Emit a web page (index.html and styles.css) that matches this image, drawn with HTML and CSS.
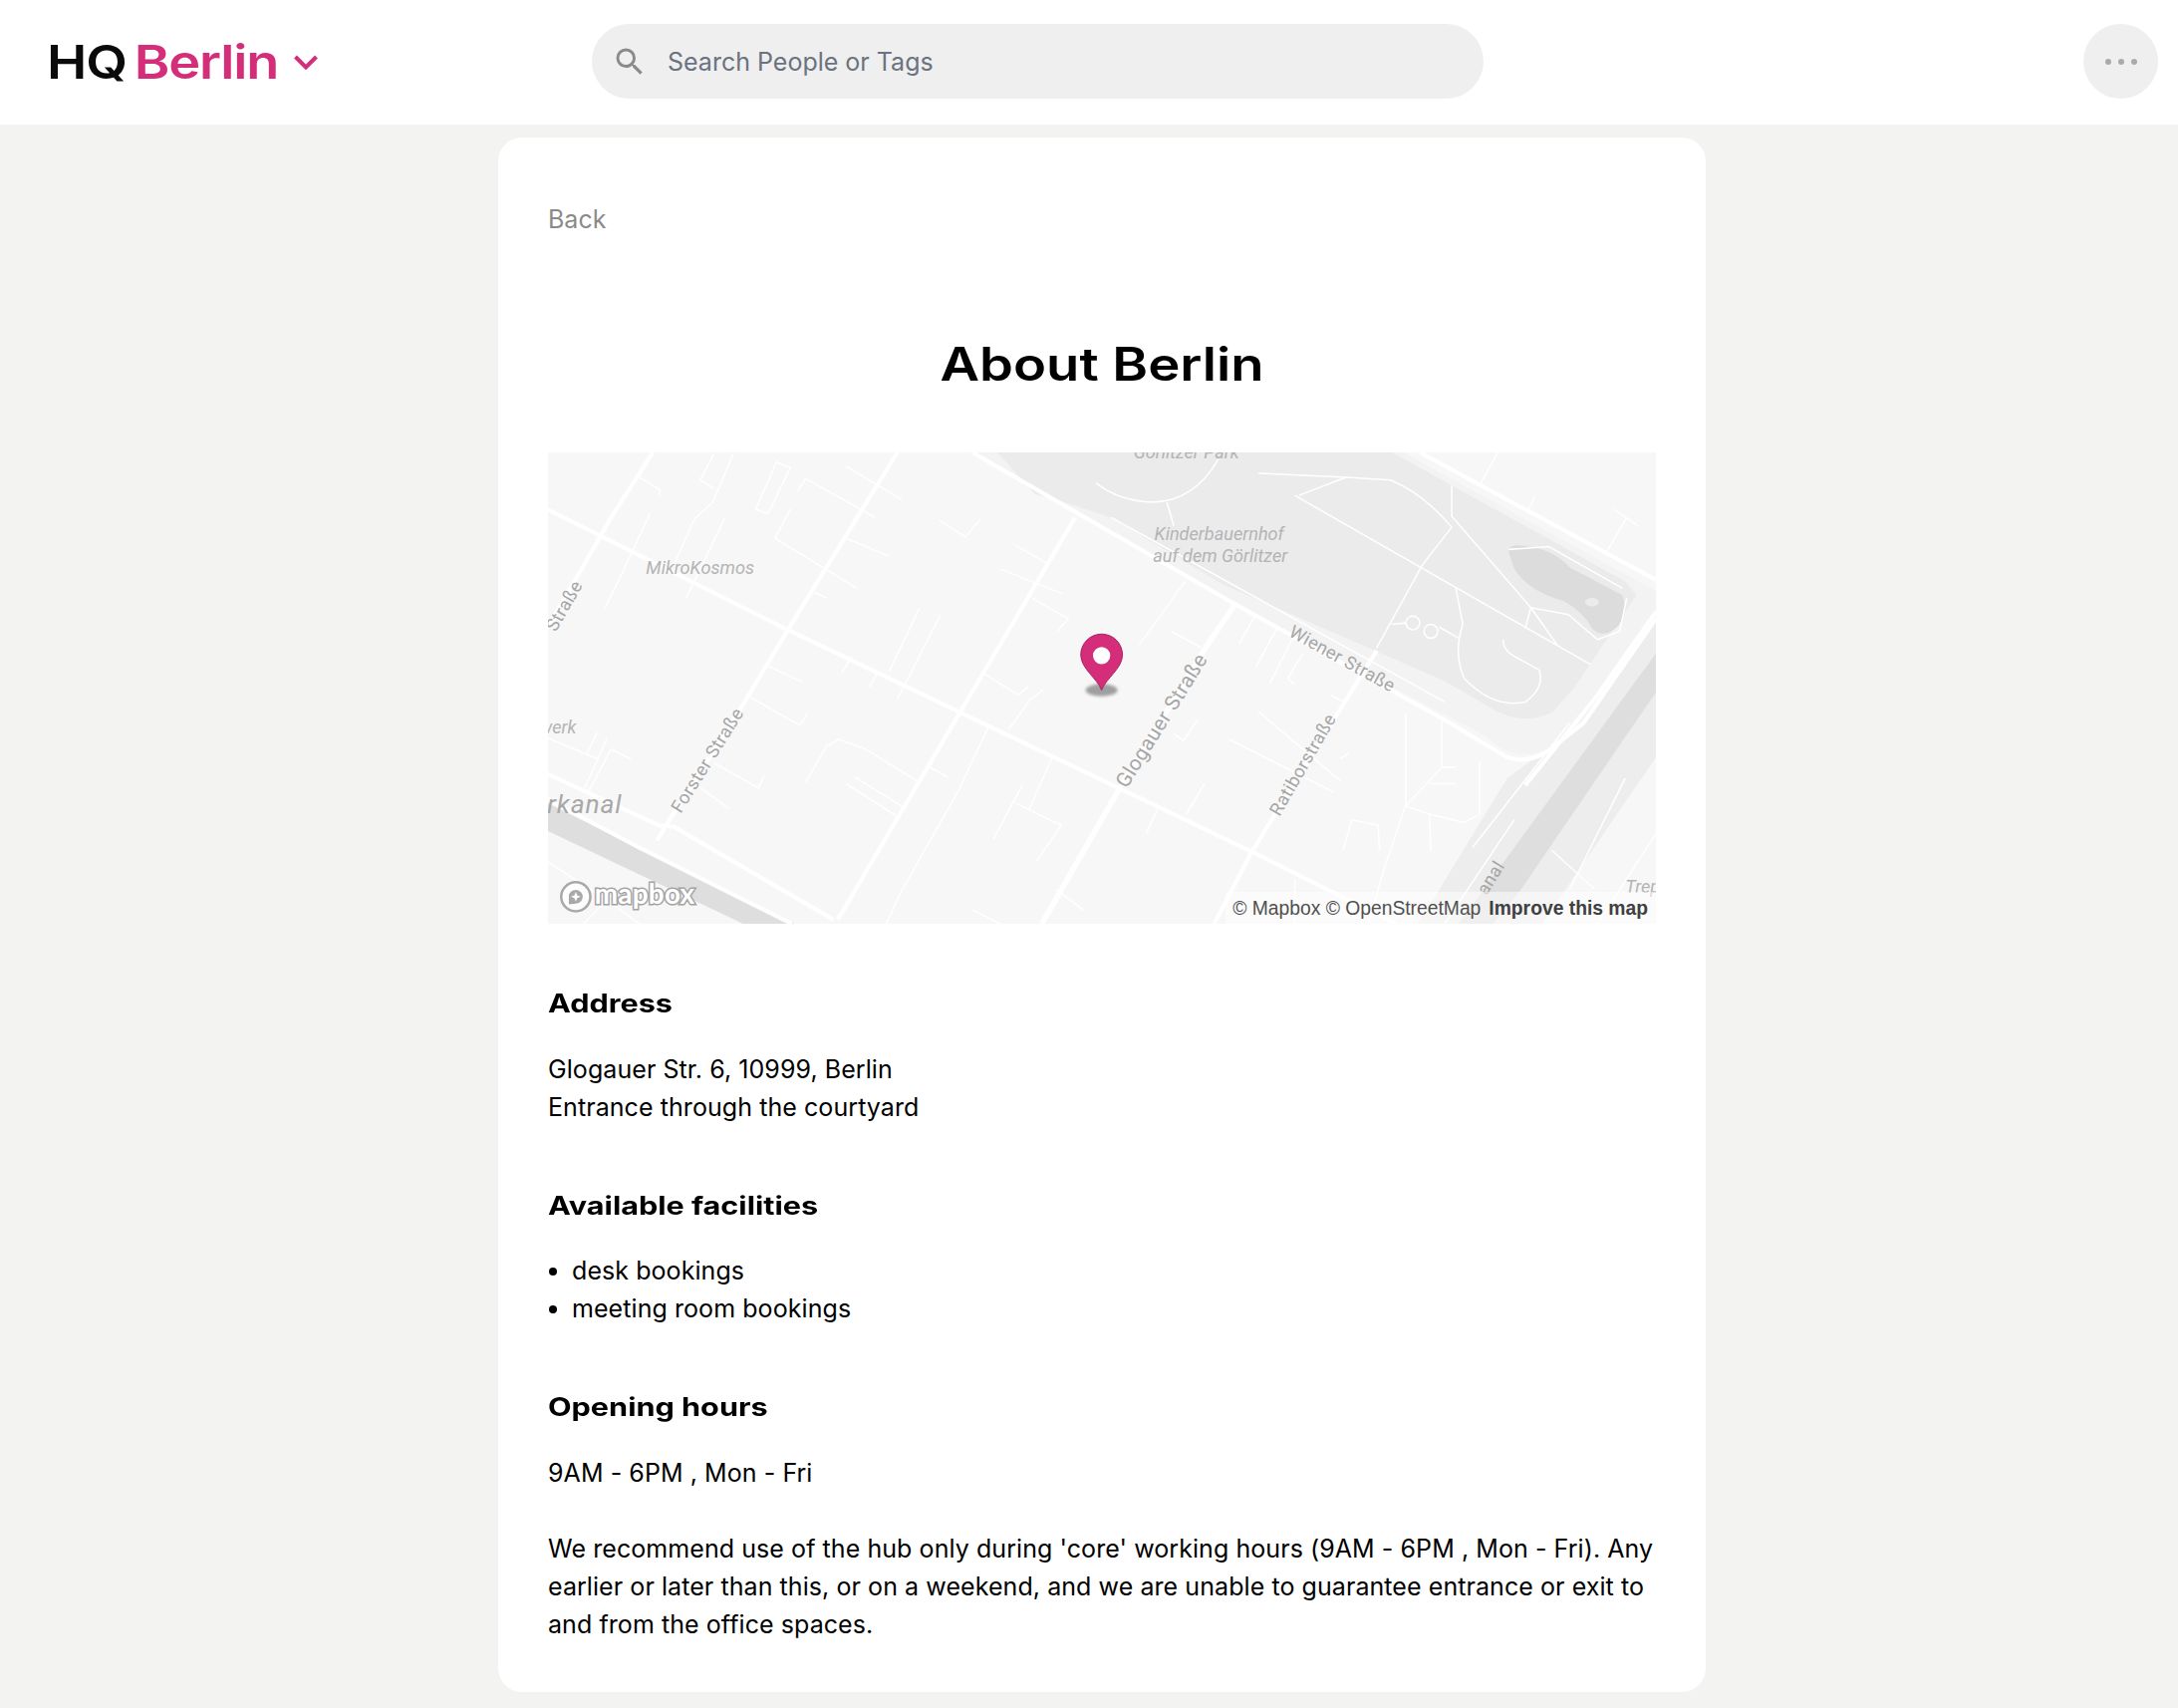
FILE: index.html
```html
<!DOCTYPE html>
<html lang="en">
<head>
<meta charset="utf-8">
<title>About Berlin</title>
<link rel="stylesheet" href="styles.css">
</head>
<body>
<header class="topbar">
  <div class="brand">
    <div class="brand-name"><span class="brand-hq">HQ</span><span class="brand-hub">Berlin</span></div>
    <svg class="chevron" viewBox="0 0 24 15"><path d="M1.5 2 L12 12.5 L22.5 2"/></svg>
  </div>
  <div class="search">
    <svg class="search-icon" viewBox="0 0 24 24"><path d="M15.5 14h-.79l-.28-.27A6.47 6.47 0 0 0 16 9.5 6.5 6.5 0 1 0 9.5 16c1.61 0 3.09-.59 4.23-1.57l.27.28v.79l5 4.99L20.49 19l-4.99-5zm-6 0C7.01 14 5 11.99 5 9.5S7.01 5 9.5 5 14 7.01 14 9.5 11.99 14 9.5 14z"/></svg>
    <span class="search-text">Search People or Tags</span>
  </div>
  <div class="more"><i></i><i></i><i></i></div>
</header>
<main class="card">
  <a class="back">Back</a>
  <h1 class="title">About Berlin</h1>
  <div class="map">
    <svg class="map-svg" viewBox="394.5 325 797.5 340" preserveAspectRatio="none">
      <rect class="land" x="394" y="325" width="800" height="340"/>
      <path class="park-edge" d="M700 325 L1010 325 L1192 425 L1192 445 L1140 520 Q1100 560 1070 530 L890 435 Z"/>
      <path class="park" d="M718 325 L1002 325 L1170 418 L1178 428 L1133 495 L1118 512 Q1100 522 1078 512 L1040 490 L880 420 L800 372 L770 362 L745 355 Z"/>
      <path class="canal-light" d="M1192 445 L1140 520 L1085 560 L1030 650 L1020 665 L1110 665 L1192 545 Z"/>
      <path class="canal" d="M1192 470 L1192 498 L1095 640 L1075 665 L1050 665 Z"/>
      <path class="canal" d="M394 578 L394 598 L535 665 L572 665 Z"/>
      <path class="pond" d="M1086 397 Q1085 390 1100 393 Q1118 395 1130 408 L1168 428 Q1172 440 1165 450 Q1155 460 1146 452 Q1140 440 1125 432 Q1100 425 1090 409 Z"/>
      <ellipse class="pond-isle" cx="1146" cy="433" rx="5" ry="3"/>
      <g class="road major">
        <path d="M394 366 L565 452 L690 512 L780 555 L905 615 L985 655 L1005 665"/>
        <path d="M700 325 L890 435 L1040 518 L1085 545 Q1100 550 1115 540 L1140 520 L1192 445"/>
        <path d="M1022 325 L1192 417"/>
        <path d="M646 325 L569 450 L530 515 L482 590 L473 605"/>
        <path d="M774 372 L692 511 L603 662"/>
        <path class="thick" d="M890 433 L869 464 L805 569 L750 665"/>
        <path d="M991 468 L900 615 L874 665"/>
        <path d="M394 557 L474 594 L485 595 L600 662"/>
        <path d="M394 575 L460 610 L540 650 L570 665"/>
        <path d="M470 325 L440 372 L395 450"/>
        <path d="M1192 440 L1150 500 L1098 565"/>
      </g>
      <g class="road minor">
        <path d="M800 372 L1040 505"/>
        <path d="M459 342 L475 352 L475 356"/>
        <path d="M528 326 L513 361 L500 373 L486 404"/>
        <path d="M514 326 L504 345 L514 351"/>
        <path d="M559 332 L569 336 L553 369 L544 366 Z"/>
        <path d="M574 353 L580 344 L630 372"/>
        <path d="M609 335 L649 359"/>
        <path d="M569 366 L558 387 L617 423"/>
        <path d="M468 369 L445 418 L435 438"/>
        <path d="M522 372 L494 430"/>
        <path d="M609 387 L640 400"/>
        <path d="M586 426 L595 430"/>
        <path d="M676 374 L695 386 L706 373"/>
        <path d="M731 392 L754 405"/>
        <path d="M720 409 L765 427"/>
        <path d="M743 430 L769 445 L761 454"/>
        <path d="M662 437 L640 483"/>
        <path d="M677 442 L646 503"/>
        <path d="M709 485 L733 500 L740 494"/>
        <path d="M751 496 L741 504 L726 525"/>
        <path d="M551 478 L578 491"/>
        <path d="M541 502 L576 522 L581 514"/>
        <path d="M606 484 L613 472"/>
        <path d="M626 494 L632 483"/>
        <path d="M580 563 L595 537 L604 532 L623 539 L660 562"/>
        <path d="M615 559 L649 580"/>
        <path d="M609 564 L645 587"/>
        <path d="M669 552 L682 559"/>
        <path d="M712 522 L690 569 L648 643 L638 665"/>
        <path d="M758 544 L741 582"/>
        <path d="M736 565 L715 604"/>
        <path d="M729 577 L764 594 L746 620"/>
        <path d="M514 549 L546 567 L550 558"/>
        <path d="M500 564 L525 582"/>
        <path d="M437 531 L421 567"/>
        <path d="M430 527 L422 543"/>
        <path d="M440 539 L454 546"/>
        <path d="M440 539 L424 569"/>
        <path d="M394 531 L430 546"/>
        <path d="M877 330 Q860 360 830 361 Q805 360 789 347"/>
        <path d="M840 361 L845 378"/>
        <path d="M932 356 L1145 478"/>
        <path d="M906 340 L969 343 L935 356"/>
        <path d="M969 343 L1001 345 Q1025 355 1045 379 L1024 406 L991 466"/>
        <path d="M1048 423 L1053 449 Q1046 470 1054 488 Q1075 510 1098 505 Q1112 495 1108 482 L1090 472 Q1082 468 1082 460"/>
        <path d="M1002 449 L1012 448 M1036 451 L1050 459"/>
        <circle cx="1017" cy="448" r="5"/>
        <circle cx="1030" cy="454" r="5"/>
        <path d="M1045 349 L1045 371 L1102 437 L1121 464"/>
        <path d="M1102 437 L1098 452"/>
        <path d="M1086 395 L1115 393 L1168 423"/>
        <path d="M1171 430 L1166 454 L1150 460 L1129 442 L1102 437"/>
        <path d="M1078 325 L1065 349"/>
        <path d="M1105 357 L1100 367"/>
        <path d="M1162 366 L1179 378"/>
        <path d="M1171 372 L1157 396"/>
        <path d="M1012 514 L1012 579 L996 626 L985 665"/>
        <path d="M1038 519 L1038 552 L1012 580"/>
        <path d="M1038 552 L1048 552"/>
        <path d="M1029 564 L1048 564"/>
        <path d="M1012 580 L1029 586 L1030 613"/>
        <path d="M1029 586 L1054 592 L1065 586 L1065 548"/>
        <path d="M967 612 L973 590 L992 594 L993 612"/>
        <path d="M1117 612 L1148 640"/>
        <path d="M932 633 L932 665"/>
        <path d="M906 512 L965 562"/>
        <path d="M885 532 L960 570"/>
        <path d="M843 454 L865 466"/>
        <path d="M820 464 L853 418"/>
        <path d="M892 463 L904 442"/>
        <path d="M904 480 L919 452"/>
        <path d="M914 492 L932 456"/>
        <path d="M927 488 L938 470 M927 488 L932 492"/>
        <path d="M852 533 L862 518"/>
        <path d="M845 528 L852 533"/>
        <path d="M854 586 L867 564"/>
        <path d="M825 600 L834 581"/>
        <path d="M958 500 L967 505"/>
        <path d="M965 546 L971 542"/>
        <path d="M1060 610 L1130 520"/>
        <path d="M1040 665 L1090 590"/>
        <path d="M1130 640 L1170 560"/>
        <path d="M1150 665 L1192 600"/>
        <path d="M700 655 L720 665"/>
        <path d="M760 640 L780 655"/>
        <path d="M394 620 L440 650 L460 665"/>
        <path d="M420 665 L445 640"/>
      </g>
      <g class="label">
        <text class="poi" x="465" y="413">MikroKosmos</text>
        <text class="poi" x="831" y="388">Kinderbauernhof</text>
        <text class="poi" x="830" y="404">auf dem Görlitzer</text>
        <text class="poi" x="816" y="329">Görlitzer Park</text>
        <text class="poi" x="388" y="528">werk</text>
        <text class="poi" x="1170" y="643">Trep</text>
        <text class="water" x="394" y="585">rkanal</text>
        <text class="street" transform="translate(400 455) rotate(-60)">Straße</text>
        <text class="street" transform="translate(490 586) rotate(-58)">Forster Straße</text>
        <text class="street glogauer" transform="translate(811 568) rotate(-58)">Glogauer Straße</text>
        <text class="street" transform="translate(921 588) rotate(-60)">Ratiborstraße</text>
        <text class="street" transform="translate(927 457) rotate(29)">Wiener Straße</text>
        <text class="street" transform="translate(1070 645) rotate(-58)">anal</text>
      </g>
      <ellipse class="pin-shadow" cx="793" cy="496.5" rx="11.5" ry="4.5"/>
      <path class="pin" d="M793 496.5 C790 488 778 481 778 471 A15 15 0 0 1 808 471 C808 481 796 488 793 496.5 Z"/>
      <circle class="pin-dot" cx="793" cy="471.5" r="6.2"/>
      <g class="mb-logo">
        <circle class="mb-ring" cx="414.5" cy="645.5" r="10.5"/>
        <path class="mb-drop" d="M409.5 651 L409.5 645 A5 5 0 1 1 414.5 650.5 Z"/>
        <path class="mb-star" d="M414.5 642 L415.5 644.5 L418 645.5 L415.5 646.5 L414.5 649 L413.5 646.5 L411 645.5 L413.5 644.5 Z"/>
        <text x="428" y="650.5">mapbox</text>
      </g>
    </svg>
    <div class="attrib"><span>© Mapbox © OpenStreetMap</span><b>Improve this map</b></div>
  </div>
  <section class="block">
    <h2>Address</h2>
    <p>Glogauer Str. 6, 10999, Berlin<br>Entrance through the courtyard</p>
  </section>
  <section class="block">
    <h2>Available facilities</h2>
    <ul>
      <li>desk bookings</li>
      <li>meeting room bookings</li>
    </ul>
  </section>
  <section class="block">
    <h2>Opening hours</h2>
    <p>9AM - 6PM , Mon - Fri</p>
    <p class="note">We recommend use of the hub only during 'core' working hours (9AM - 6PM , Mon - Fri). Any earlier or later than this, or on a weekend, and we are unable to guarantee entrance or exit to and from the office spaces.</p>
  </section>
</main>
</body>
</html>
```
FILE: styles.css
```css
* { box-sizing: border-box; }
html, body { margin: 0; }
body {
  background: #f3f3f1;
  font-family: Inter, "Liberation Sans", sans-serif;
  color: #000;
  height: 1714px;
  overflow: hidden;
}
.topbar {
  height: 125px;
  background: #fff;
  display: flex;
  align-items: center;
  padding: 0 20px 2px 47px;
}
.brand {
  width: 547px;
  display: flex;
  align-items: center;
}
.brand-name {
  width: 232px;
  font-size: 47px;
  font-weight: 600;
  line-height: 1;
  letter-spacing: -1px;
  white-space: nowrap;
  transform: scaleX(1.15);
  transform-origin: left center;
}
.brand-hq { color: #0a0a0a; }
.brand-hub { color: #d42d7a; margin-left: 7px; }
.chevron {
  width: 24px;
  height: 15px;
  margin: 2px 0 0 16px;
  fill: none;
  stroke: #d42d7a;
  stroke-width: 4;
}
.search {
  width: 895px;
  height: 75px;
  border-radius: 38px;
  background: #efefef;
  display: flex;
  align-items: center;
  padding-left: 20px;
}
.search-icon { width: 36px; height: 36px; fill: #8a8a8a; }
.search-text { margin-left: 20px; font-size: 25px; color: #6b7280; }
.more {
  width: 75px;
  height: 75px;
  border-radius: 50%;
  background: #efefef;
  margin-left: auto;
  display: flex;
  align-items: center;
  justify-content: center;
  gap: 7px;
}
.more i { width: 6px; height: 6px; border-radius: 50%; background: #aaa; }
.card {
  width: 1212px;
  height: 1560px;
  margin: 13px 0 0 500px;
  background: #fff;
  border-radius: 24px;
  padding: 64px 50px 0;
}
.back { display: block; font-size: 25px; line-height: 36px; color: #8a8a8a; }
.title {
  margin: 99px 0 0;
  text-align: center;
  font-size: 46.5px;
  line-height: 56px;
  font-weight: 600;
  transform: scaleX(1.17);
}
.map { position: relative; margin-top: 61px; height: 473px; overflow: hidden; }
.map-svg { display: block; width: 100%; height: 100%; }
.land { fill: #f7f7f7; }
.park-edge { fill: #f3f3f3; }
.park { fill: #ebebec; }
.canal { fill: #dedede; }
.canal-light { fill: #ededed; }
.pond { fill: #dcdcdc; }
.pond-isle { fill: #ebebec; }
.road { fill: none; stroke: #fff; stroke-linejoin: round; }
.major { stroke-width: 3; }
.major .thick { stroke-width: 4; }
.minor { stroke-width: 1.1; }
.label text { font-family: Roboto, sans-serif; }
.poi { font-size: 13px; font-style: italic; fill: #b4b4b4; }
.water { font-size: 19px; font-style: italic; fill: #a8a8a8; letter-spacing: 0.6px; }
.street { font-size: 13px; fill: #a6a6a6; letter-spacing: 0.3px; }
.street.glogauer { font-size: 14.8px; }
.pin-shadow { fill: #8a8a8a; opacity: 0.8; filter: blur(1.2px); }
.pin { fill: #d42d7a; stroke: #a81f5f; stroke-width: 0.7; }
.pin-dot { fill: #fff; }
.mb-ring { fill: #fff; stroke: #a9a9a9; stroke-width: 1.8; fill-opacity: 0.7; }
.mb-drop { fill: #a9a9a9; }
.mb-star { fill: #fff; }
.mb-logo text {
  font-family: Lato, sans-serif;
  font-weight: 700;
  font-size: 20px;
  fill: #fff;
  stroke: #a4a4a4;
  stroke-width: 2.2;
  paint-order: stroke;
  letter-spacing: 0.2px;
}
.attrib {
  position: absolute;
  right: 0;
  bottom: 0;
  height: 32px;
  padding: 1px 8px 0 7px;
  background: rgba(255, 255, 255, 0.5);
  display: flex;
  align-items: center;
  gap: 8px;
  font-family: "Liberation Sans", sans-serif;
  font-size: 19.3px;
  color: #505050;
}
.attrib b { color: #404040; }
.block { margin-top: 62px; }
.block h2 {
  margin: 0;
  font-size: 25.5px;
  line-height: 36px;
  font-weight: 700;
  transform: scaleX(1.2);
  transform-origin: left center;
}
.block p, .block ul {
  margin: 28.5px 0 0;
  font-size: 25px;
  line-height: 38px;
  letter-spacing: 0.07px;
}
.block ul { padding-left: 24px; }
.block p.note { margin-top: 38px; }
```
